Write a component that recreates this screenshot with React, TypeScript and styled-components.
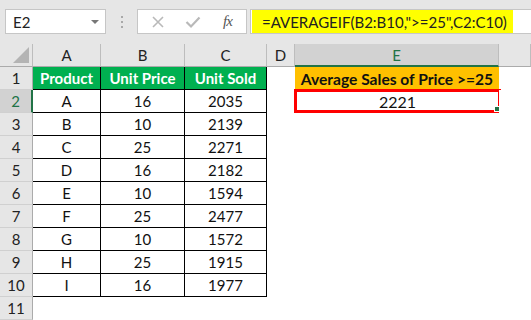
import styled, { createGlobalStyle } from "styled-components";

const GlobalStyle = createGlobalStyle`
  html, body {
    margin: 0;
    padding: 0;
    background: #ffffff;
  }
  body {
    font-family: Lato, "Liberation Sans", sans-serif;
    width: 531px;
    height: 320px;
    overflow: hidden;
  }
`;

const Page = styled.div`
  width: 531px;
  height: 320px;
  display: flex;
  flex-direction: column;
  background: #ffffff;
`;

const Toolbar = styled.div`
  height: 44px;
  background: #e6e6e6;
  display: flex;
  align-items: flex-start;
  padding: 9px 0 0 5px;
  box-sizing: border-box;
`;

const NameBox = styled.div`
  width: 101px;
  height: 25px;
  box-sizing: border-box;
  background: #ffffff;
  border: 1px solid #c6c6c6;
  display: flex;
  align-items: center;
  justify-content: space-between;
  padding: 0 6px 0 7px;
  font-size: 15px;
  color: #222;
`;

const Caret = styled.span`
  width: 0;
  height: 0;
  border-left: 4px solid transparent;
  border-right: 4px solid transparent;
  border-top: 4px solid #777;
`;

const Grip = styled.div`
  width: 31px;
  height: 25px;
  display: flex;
  flex-direction: column;
  align-items: center;
  justify-content: center;
  gap: 3px;
`;

const Dot = styled.span`
  width: 2px;
  height: 2px;
  background: #a8a8a8;
`;

const IconBox = styled.div`
  width: 110px;
  height: 25px;
  box-sizing: border-box;
  background: #ffffff;
  border: 1px solid #c6c6c6;
  display: flex;
  align-items: center;
  padding-left: 13px;
  gap: 20px;
`;

const Fx = styled.span`
  font-family: "Liberation Serif", serif;
  font-style: italic;
  font-size: 15px;
  color: #555;
  margin-left: 2px;
  letter-spacing: -1px;
`;

const FormulaBar = styled.div`
  flex: 1;
  height: 25px;
  margin-left: 3px;
  box-sizing: border-box;
  background: #ffffff;
  border: 1px solid #c6c6c6;
  border-right: none;
  display: flex;
  align-items: stretch;
  padding-left: 1px;
`;

const Formula = styled.span`
  background: #ffff00;
  display: flex;
  align-items: center;
  padding: 0 6px 0 10px;
  font-size: 15px;
  color: #222;
  white-space: nowrap;
`;

const Sheet = styled.div`
  display: grid;
  grid-template-columns: 33px 68px 84px 82px 28px 204px 1fr;
  grid-auto-rows: 23px;
  background: #e6e6e6;
`;

const Corner = styled.div`
  background: #e6e6e6;
  border-right: 1px solid #bdbdbd;
  border-bottom: 1px solid #ababab;
  box-sizing: border-box;
  display: flex;
  align-items: flex-end;
  justify-content: flex-end;
  padding: 0 3px 3px 0;
`;

const ColHead = styled.div<{ $active?: boolean }>`
  background: ${(p) => (p.$active ? "#d2d2d2" : "#e6e6e6")};
  color: ${(p) => (p.$active ? "#217346" : "#222")};
  border-right: 1px solid #bdbdbd;
  border-bottom: ${(p) => (p.$active ? "2px solid #217346" : "1px solid #ababab")};
  box-sizing: border-box;
  display: flex;
  align-items: center;
  justify-content: center;
  font-size: 15px;
  padding-top: ${(p) => (p.$active ? "1px" : "0")};
`;

const RowHead = styled.div<{ $active?: boolean }>`
  background: ${(p) => (p.$active ? "#d2d2d2" : "#e6e6e6")};
  color: ${(p) => (p.$active ? "#217346" : "#222")};
  border-right: ${(p) => (p.$active ? "2px solid #217346" : "1px solid #ababab")};
  border-bottom: 1px solid #d0d0d0;
  box-sizing: border-box;
  display: flex;
  align-items: center;
  justify-content: center;
  font-size: 15px;
`;

const Cell = styled.div<{ $bg?: string; $bold?: boolean; $boxed?: boolean; $color?: string; $size?: number }>`
  background: ${(p) => p.$bg ?? "#ffffff"};
  color: ${(p) => p.$color ?? "#111"};
  font-weight: ${(p) => (p.$bold ? 700 : 400)};
  border-right: ${(p) => (p.$boxed ? "1px solid #000" : "none")};
  border-bottom: ${(p) => (p.$boxed ? "1px solid #000" : "none")};
  box-sizing: border-box;
  display: flex;
  align-items: center;
  justify-content: center;
  font-size: ${(p) => p.$size ?? 15}px;
  white-space: nowrap;
  position: relative;
`;

const Result = styled(Cell)`
  border: 3px solid #ff0000;
  margin: -1px -2px 0 -1px;
`;

const Handle = styled.span`
  position: absolute;
  right: -2px;
  bottom: -2px;
  width: 4px;
  height: 4px;
  background: #217346;
  border: 1px solid #fff;
`;

const rows = [
  ["A", "16", "2035"],
  ["B", "10", "2139"],
  ["C", "25", "2271"],
  ["D", "16", "2182"],
  ["E", "10", "1594"],
  ["F", "25", "2477"],
  ["G", "10", "1572"],
  ["H", "25", "1915"],
  ["I", "16", "1977"],
];

export default function App() {
  return (
    <Page>
      <GlobalStyle />
      <Toolbar>
        <NameBox>
          E2
          <Caret />
        </NameBox>
        <Grip>
          <Dot />
          <Dot />
          <Dot />
        </Grip>
        <IconBox>
          <svg width="14" height="14" viewBox="0 0 14 14">
            <path d="M2 2 L12 12 M12 2 L2 12" stroke="#b9b9b9" strokeWidth="1.6" />
          </svg>
          <svg width="16" height="14" viewBox="0 0 16 14">
            <path d="M1.5 7 L6 11.5 L14.5 2.5" stroke="#b9b9b9" strokeWidth="2.2" fill="none" />
          </svg>
          <Fx>fx</Fx>
        </IconBox>
        <FormulaBar>
          <Formula>=AVERAGEIF(B2:B10,"&gt;=25",C2:C10)</Formula>
        </FormulaBar>
      </Toolbar>
      <Sheet>
        <Corner>
          <svg width="16" height="16" viewBox="0 0 16 16">
            <path d="M16 0 L16 16 L0 16 Z" fill="#b4b4b4" />
          </svg>
        </Corner>
        <ColHead>A</ColHead>
        <ColHead>B</ColHead>
        <ColHead>C</ColHead>
        <ColHead>D</ColHead>
        <ColHead $active>E</ColHead>
        <ColHead />

        <RowHead>1</RowHead>
        <Cell $boxed $bold $bg="#00b050" $color="#fff">Product</Cell>
        <Cell $boxed $bold $bg="#00b050" $color="#fff">Unit Price</Cell>
        <Cell $boxed $bold $bg="#00b050" $color="#fff">Unit Sold</Cell>
        <Cell />
        <Cell $bold $bg="#ffc000" $size={15.6}>Average Sales of Price &gt;=25</Cell>
        <Cell />

        {rows.map((r, i) => (
          <>
            <RowHead key={"h" + i} $active={i === 0}>
              {i + 2}
            </RowHead>
            <Cell $boxed>{r[0]}</Cell>
            <Cell $boxed>{r[1]}</Cell>
            <Cell $boxed>{r[2]}</Cell>
            <Cell />
            {i === 0 ? (
              <Result $size={16}>
                2221
                <Handle />
              </Result>
            ) : (
              <Cell />
            )}
            <Cell />
          </>
        ))}

        <RowHead>11</RowHead>
        <Cell />
        <Cell />
        <Cell />
        <Cell />
        <Cell />
        <Cell />
      </Sheet>
    </Page>
  );
}
